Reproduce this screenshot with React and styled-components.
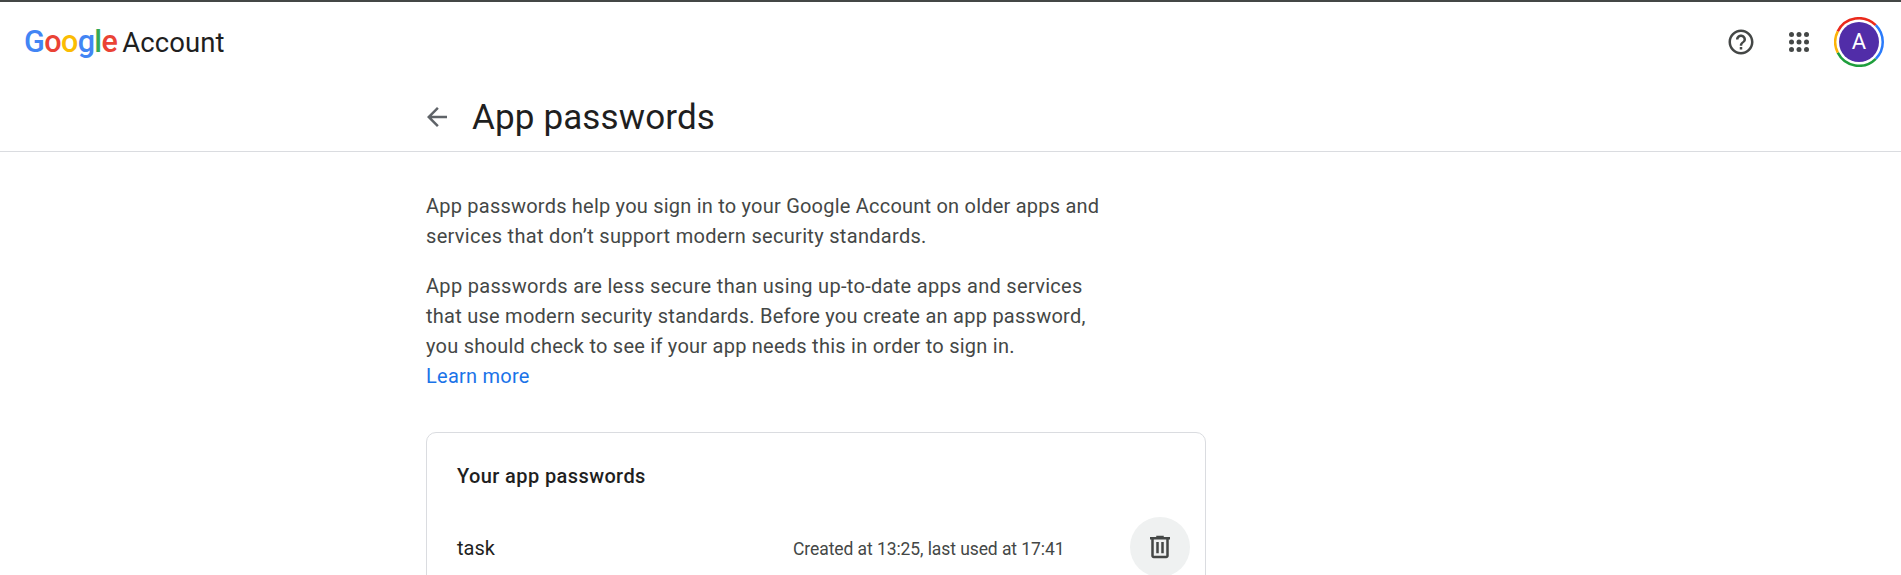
import React from "react";
import styled, { createGlobalStyle } from "styled-components";

const GlobalStyle = createGlobalStyle`
  * { box-sizing: border-box; }
  html, body { margin: 0; padding: 0; }
  body {
    height: 575px;
    overflow: hidden;
    background: #fff;
    color: #1f1f1f;
    font-family: Roboto, "Liberation Sans", sans-serif;
  }
`;

const Page = styled.div`
  height: 575px;
  overflow: hidden;
  border-top: 2px solid #444746;
`;

const TopBar = styled.header`
  display: flex;
  align-items: center;
  justify-content: space-between;
  height: 80px;
  padding: 0 17px 0 24px;
`;

const Brand = styled.a`
  display: flex;
  align-items: baseline;
  gap: 5px;
  text-decoration: none;
`;

const Wordmark = styled.span`
  font-size: 30.5px;
  font-weight: 500;
  line-height: 40px;
  letter-spacing: -0.6px;
`;

const Letter = styled.span`
  color: ${(p) => p.$color};
`;

const Product = styled.span`
  color: #1f1f1f;
  font-size: 27.5px;
  line-height: 40px;
  letter-spacing: 0.1px;
`;

const Actions = styled.div`
  display: flex;
  align-items: center;
`;

const IconButton = styled.button`
  display: flex;
  align-items: center;
  justify-content: center;
  flex: none;
  width: ${(p) => p.$size}px;
  height: ${(p) => p.$size}px;
  padding: 0;
  border: 0;
  border-radius: 50%;
  background: ${(p) => p.$background || "transparent"};
  color: ${(p) => p.$color || "#444746"};
`;

const Icon = styled.svg`
  display: block;
  width: 30px;
  height: 30px;
  fill: currentColor;
`;

const Avatar = styled.button`
  display: grid;
  place-items: center;
  width: 50px;
  height: 50px;
  margin-left: 6px;
  padding: 0;
  border: 0;
  background: none;
  & > * { grid-area: 1 / 1; }
`;

const Ring = styled.svg`
  width: 50px;
  height: 50px;
  fill: none;
  stroke-width: 2.5;
`;

const Initial = styled.span`
  display: flex;
  align-items: center;
  justify-content: center;
  width: 40px;
  height: 40px;
  border-radius: 50%;
  background: #512da8;
  color: #fff;
  font: 400 22px/40px Roboto, sans-serif;
`;

const TitleBar = styled.div`
  height: 70px;
  border-bottom: 1px solid #dadce0;
`;

const Column = styled.div`
  width: 780px;
  margin-left: 426px;
`;

const TitleRow = styled(Column)`
  display: flex;
  align-items: center;
  gap: 20px;
  height: 70px;
  margin-left: 422px;
`;

const Title = styled.h1`
  margin: 0;
  font-size: 35px;
  font-weight: 400;
  line-height: 45px;
  letter-spacing: 0.14px;
`;

const Main = styled(Column)`
  padding-top: 39px;
`;

const Paragraph = styled.p`
  margin: 0 0 20px;
  color: #444746;
  font-size: 20px;
  line-height: 30px;
`;

const Line = styled.span`
  display: block;
  width: max-content;
  white-space: nowrap;
  letter-spacing: ${(p) => p.$spacing}px;
`;

const Link = styled.a`
  display: block;
  width: max-content;
  color: #1a73e8;
  letter-spacing: 0.25px;
  text-decoration: none;
`;

const Card = styled.section`
  height: 300px;
  margin-top: 41px;
  padding: 28px 15px 0 30px;
  border: 1px solid #dadce0;
  border-radius: 10px;
`;

const CardTitle = styled.h2`
  margin: 0;
  font-size: 20px;
  font-weight: 500;
  line-height: 30px;
  letter-spacing: 0.4px;
`;

const PasswordRow = styled.div`
  display: grid;
  grid-template-columns: 336px 1fr auto;
  align-items: center;
  margin-top: 26px;
`;

const AppName = styled.span`
  padding-top: 2px;
  font-size: 20px;
  line-height: 30px;
`;

const Usage = styled.span`
  padding-top: 4px;
  color: #444746;
  font-size: 17.5px;
  line-height: 25px;
  letter-spacing: -0.08px;
`;

const wordmark = [
  ["G", "#4285f4"],
  ["o", "#ea4335"],
  ["o", "#fbbc04"],
  ["g", "#4285f4"],
  ["l", "#34a853"],
  ["e", "#ea4335"],
];

const intro = [
  ["App passwords help you sign in to your Google Account on older apps and", 0.217],
  ["services that don’t support modern security standards.", 0.305],
];

const warning = [
  ["App passwords are less secure than using up-to-date apps and services", 0.309],
  ["that use modern security standards. Before you create an app password,", 0.252],
  ["you should check to see if your app needs this in order to sign in.", 0.245],
];

const renderLines = (lines) =>
  lines.map(([text, spacing]) => (
    <Line key={text} $spacing={spacing}>
      {text}
    </Line>
  ));

export default function App() {
  return (
    <>
      <GlobalStyle />
      <Page>
        <TopBar>
          <Brand>
            <Wordmark>
              {wordmark.map(([char, color], i) => (
                <Letter key={i} $color={color}>
                  {char}
                </Letter>
              ))}
            </Wordmark>
            <Product>Account</Product>
          </Brand>
          <Actions>
            <IconButton $size={58} aria-label="Help">
              <Icon viewBox="0 0 24 24">
                <path d="M11 18h2v-2h-2v2zm1-16C6.48 2 2 6.48 2 12s4.48 10 10 10 10-4.48 10-10S17.52 2 12 2zm0 18c-4.41 0-8-3.59-8-8s3.59-8 8-8 8 3.59 8 8-3.59 8-8 8zm0-14c-2.21 0-4 1.79-4 4h2c0-1.1.9-2 2-2s2 .9 2 2c0 2-3 1.75-3 5h2c0-2.25 3-2.5 3-5 0-2.21-1.79-4-4-4z" />
              </Icon>
            </IconButton>
            <IconButton $size={58} aria-label="Google apps">
              <Icon viewBox="0 0 24 24">
                {[6, 12, 18].map((y) =>
                  [6, 12, 18].map((x) => <circle key={`${x}-${y}`} cx={x} cy={y} r="2" />)
                )}
              </Icon>
            </IconButton>
            <Avatar aria-label="Google Account">
              <Ring viewBox="0 0 50 50">
                <path stroke="#ea2a1c" d="M3.75 14.37A23.75 23.75 0 0 1 41.79 8.21" />
                <path stroke="#2a7bfb" d="M41.79 8.21A23.75 23.75 0 0 1 41.79 41.79" />
                <path stroke="#1e9e3c" d="M41.79 41.79A23.75 23.75 0 0 1 3.75 35.63" />
                <path stroke="#fcb307" d="M3.75 35.63A23.75 23.75 0 0 1 3.75 14.37" />
              </Ring>
              <Initial>A</Initial>
            </Avatar>
          </Actions>
        </TopBar>

        <TitleBar>
          <TitleRow>
            <IconButton $size={30} $color="#5f6368" aria-label="Back">
              <Icon viewBox="0 0 24 24">
                <path d="M20 11H7.83l5.59-5.59L12 4l-8 8 8 8 1.41-1.41L7.83 13H20v-2z" />
              </Icon>
            </IconButton>
            <Title>App passwords</Title>
          </TitleRow>
        </TitleBar>

        <Main>
          <Paragraph>{renderLines(intro)}</Paragraph>
          <Paragraph>
            {renderLines(warning)}
            <Link>Learn more</Link>
          </Paragraph>
          <Card>
            <CardTitle>Your app passwords</CardTitle>
            <PasswordRow>
              <AppName>task</AppName>
              <Usage>Created at 13:25, last used at 17:41</Usage>
              <IconButton $size={60} $background="#eff1f1" aria-label="Delete task">
                <Icon viewBox="0 0 24 24">
                  <path d="M15 4V3H9v1H4v2h1v13c0 1.1.9 2 2 2h10c1.1 0 2-.9 2-2V6h1V4h-5zm2 15H7V6h10v13zM9 8h2v9H9zm4 0h2v9h-2z" />
                </Icon>
              </IconButton>
            </PasswordRow>
          </Card>
        </Main>
      </Page>
    </>
  );
}
